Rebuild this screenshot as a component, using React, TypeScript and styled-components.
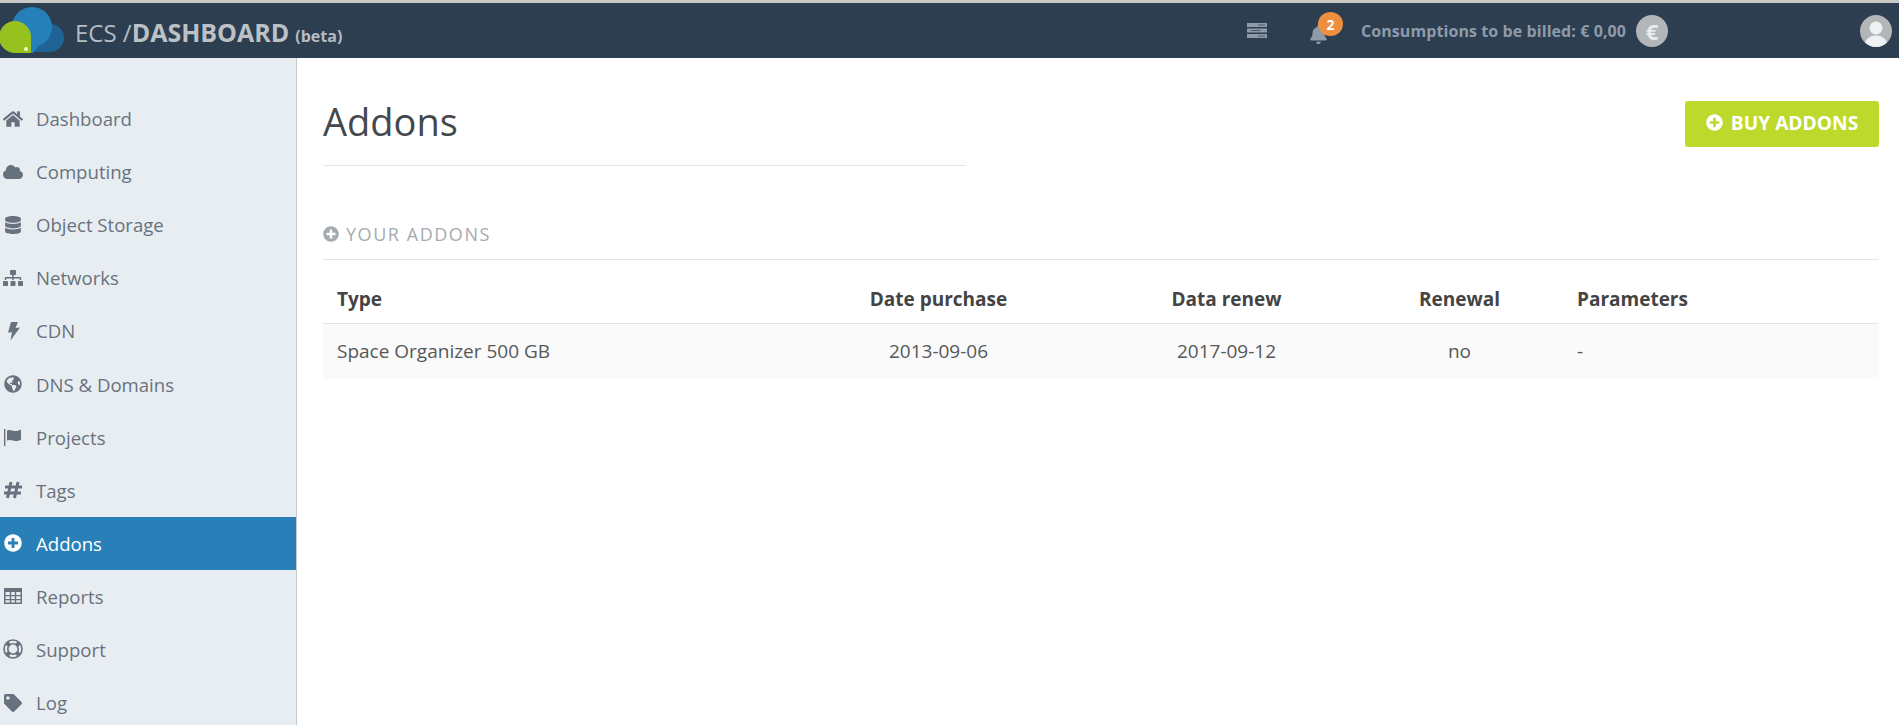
import * as React from "react";
import styled, { createGlobalStyle } from "styled-components";
import {
  FaHome,
  FaCloud,
  FaDatabase,
  FaSitemap,
  FaGlobeAmericas,
  FaPlusCircle,
  FaTag,
  FaBell,
} from "react-icons/fa";

const GlobalStyle = createGlobalStyle`
  html, body {
    margin: 0;
    height: 100%;
    overflow: hidden;
    background: #fff;
    font-family: "Open Sans", "Liberation Sans", sans-serif;
  }
`;

const Page = styled.div`
  box-sizing: border-box;
  border-top: 3px solid #c9c9c6;
  display: flex;
  flex-direction: column;
  height: 725px;
`;

const Header = styled.header`
  align-items: center;
  background: #2c3e50;
  display: flex;
  flex: 0 0 55px;
  padding-right: 7px;
`;

const Logo = styled.svg`
  flex: 0 0 auto;
  height: 55px;
  width: 66px;
`;

const Brand = styled.div`
  color: #b4bcc4;
  font-size: 24px;
  margin-left: 9px;
  margin-top: 3px;
  white-space: nowrap;

  b {
    color: #bcc1c6;
    font-size: 25px;
    font-weight: 700;
  }

  small {
    font-size: 16px;
    font-weight: 700;
    margin-left: 6px;
  }
`;

const HeaderRight = styled.div`
  align-items: center;
  color: #8f9baa;
  display: flex;
  margin-left: auto;
`;

const BellWrap = styled.div`
  display: flex;
  margin-left: 42px;
  margin-top: 8px;
  position: relative;
`;

const Badge = styled.span`
  align-items: center;
  background: #ee8f3f;
  border-radius: 50%;
  color: #fff;
  display: flex;
  font-size: 14px;
  font-weight: 700;
  height: 24px;
  justify-content: center;
  left: 9px;
  position: absolute;
  top: -13px;
  width: 25px;
`;

const Billing = styled.span`
  font-size: 16px;
  font-weight: 700;
  letter-spacing: 0.08px;
  margin-left: 33px;
`;

const RoundIcon = styled.span<{ $left: number }>`
  align-items: center;
  background: #b3b6b9;
  border-radius: 50%;
  color: #e9ecee;
  display: flex;
  font-size: 22px;
  font-weight: 700;
  height: 32px;
  justify-content: center;
  margin-left: ${(p) => p.$left}px;
  overflow: hidden;
  width: 32px;
`;

const Body = styled.div`
  display: flex;
  flex: 1;
  min-height: 0;
`;

const Sidebar = styled.nav`
  background: #e8edf2;
  border-right: 1px solid #c5c9cc;
  flex: 0 0 296px;
  overflow: hidden;
  padding-top: 34px;
`;

const NavItem = styled.a<{ $active?: boolean }>`
  align-items: center;
  background: ${(p) => (p.$active ? "#2980b9" : "transparent")};
  color: ${(p) => (p.$active ? "#fff" : "#68727e")};
  display: flex;
  font-size: 18.6px;
  height: 53.1px;

  svg {
    flex: 0 0 20px;
    font-size: 18px;
    margin: 0 13px 0 3px;
  }
`;

const Main = styled.main`
  flex: 1;
  min-width: 0;
  padding: 0 20px 0 26px;
`;

const TitleRow = styled.div`
  display: flex;
  justify-content: space-between;
`;

const TitleBlock = styled.div`
  border-bottom: 1px solid #e6e6e6;
  box-sizing: border-box;
  height: 108px;
  padding-top: 37px;
  width: 643px;
`;

const Title = styled.h1`
  color: #44484c;
  font-size: 38px;
  font-weight: 400;
  line-height: 52px;
  margin: 0;
`;

const BuyButton = styled.button`
  align-items: center;
  background: #bdd92c;
  border: none;
  border-radius: 3px;
  color: #fff;
  display: flex;
  font-family: inherit;
  font-size: 19.2px;
  font-weight: 700;
  gap: 8px;
  height: 46px;
  justify-content: center;
  margin-top: 43px;
  padding: 0 0 3px;
  width: 194px;
`;

const SectionTitle = styled.h2`
  align-items: center;
  border-bottom: 1px solid #e3e3e3;
  box-sizing: border-box;
  color: #a5abb1;
  display: flex;
  font-size: 18px;
  font-weight: 400;
  gap: 7px;
  height: 54px;
  letter-spacing: 1.55px;
  margin: 40px 0 0;
  padding-top: 3px;
  text-transform: uppercase;
`;

const Table = styled.table`
  border-collapse: collapse;
  color: #444;
  font-size: 19px;
  margin-top: 14px;
  table-layout: fixed;
  width: 100%;
`;

const Th = styled.th<{ $align?: string; $width: number }>`
  border-bottom: 1px solid #e3e3e3;
  box-sizing: border-box;
  font-weight: 700;
  height: 49px;
  padding: 2px 13px 0 14px;
  text-align: ${(p) => p.$align || "left"};
  width: ${(p) => p.$width}px;
`;

const Td = styled.td<{ $align?: string }>`
  background: #fafafa;
  color: #55585b;
  height: 55px;
  padding: 0 13px 0 14px;
  text-align: ${(p) => p.$align || "left"};
`;

const BoltIcon = () => (
  <svg viewBox="0 0 20 20" width="20" height="20" fill="currentColor">
    <path d="M8 1h7l-2.500 6 4.500-.5L7.500 19.500l1.500-8.500-4 .8z" />
  </svg>
);

const FlagIcon = () => (
  <svg viewBox="0 0 20 20" width="20" height="20" fill="currentColor">
    <rect x="1" y="2" width="1.4" height="17" />
    <path d="M4 3.500c4-1.500 6 1 9 .5 2.500-.4 4-1 5-1.500v10c-1.500 1-3.500 1.500-5 1.500-3 0-5-2-9-.5z" />
  </svg>
);

const HashIcon = () => (
  <svg viewBox="0 0 20 20" width="20" height="20" fill="none" stroke="currentColor" strokeWidth="3">
    <path d="M8 2 4.500 18M15 2l-3.500 16M2 7h17M1 13h17" />
  </svg>
);

const TableIcon = () => (
  <svg viewBox="0 0 20 20" width="20" height="20" fill="currentColor">
    <path
      fillRule="evenodd"
      d="M1 2h18v16H1zM2.500 6v3h4.300V6zm5.700 0v3h3.600V6zm5 0v3h4.300V6zM2.500 10.200v2.800h4.300v-2.800zm5.700 0v2.800h3.600v-2.800zm5 0v2.800h4.300v-2.800zM2.500 14.200v2.400h4.300v-2.400zm5.700 0v2.400h3.600v-2.400zm5 0v2.400h4.300v-2.400z"
    />
  </svg>
);

const RingIcon = () => (
  <svg viewBox="0 0 20 20" width="20" height="20" fill="none" stroke="currentColor">
    <circle cx="10" cy="10" r="9" strokeWidth="1.600" />
    <circle cx="10" cy="10" r="5.200" strokeWidth="1.600" />
    <path d="M4 4l2.500 2.500M16 4l-2.500 2.500M4 16l2.500-2.500M16 16l-2.500-2.500" strokeWidth="4" />
  </svg>
);

const ServerIcon = () => (
  <svg viewBox="0 0 20 15" width="20" height="15">
    <rect y="0" width="20" height="4" fill="#8f9baa" />
    <rect y="5.500" width="20" height="4" fill="#8f9baa" />
    <rect y="11" width="20" height="4" fill="#8f9baa" />
    <rect x="11" y="1.500" width="7" height="1" fill="#46586b" />
    <rect x="4" y="7" width="10" height="1" fill="#46586b" />
    <rect x="11" y="12.500" width="7" height="1" fill="#46586b" />
  </svg>
);

const AvatarIcon = () => (
  <svg viewBox="0 0 32 32" width="32" height="32">
    <circle cx="16" cy="13" r="6.500" fill="#eef1f2" />
    <ellipse cx="16" cy="29" rx="11" ry="8.500" fill="#eef1f2" />
  </svg>
);

const navItems = [
  { label: "Dashboard", icon: <FaHome /> },
  { label: "Computing", icon: <FaCloud /> },
  { label: "Object Storage", icon: <FaDatabase /> },
  { label: "Networks", icon: <FaSitemap /> },
  { label: "CDN", icon: <BoltIcon /> },
  { label: "DNS & Domains", icon: <FaGlobeAmericas /> },
  { label: "Projects", icon: <FlagIcon /> },
  { label: "Tags", icon: <HashIcon /> },
  { label: "Addons", icon: <FaPlusCircle />, active: true },
  { label: "Reports", icon: <TableIcon /> },
  { label: "Support", icon: <RingIcon /> },
  { label: "Log", icon: <FaTag /> },
];

const App = () => (
  <Page>
    <GlobalStyle />
    <Header>
      <Logo viewBox="0 0 66 55">
        <circle cx="50" cy="35" r="14" fill="#1f6394" />
        <rect x="30" y="35" width="20" height="14" fill="#1f6394" />
        <circle cx="32" cy="24" r="20" fill="#2580b9" />
        <path d="M25 35h20l-12 15h-8z" fill="#2580b9" />
        <path d="M-1 34a16 16 0 0 1 32 0V50H15A16 16 0 0 1-1 34z" fill="#96c11f" />
        <circle cx="26" cy="46" r="2" fill="#f0f7cc" />
      </Logo>
      <Brand>
        ECS /<b>DASHBOARD</b>
        <small>(beta)</small>
      </Brand>
      <HeaderRight>
        <ServerIcon />
        <BellWrap>
          <FaBell size={19} />
          <Badge>2</Badge>
        </BellWrap>
        <Billing>Consumptions to be billed: € 0,00</Billing>
        <RoundIcon $left={10}>€</RoundIcon>
        <RoundIcon $left={192}>
          <AvatarIcon />
        </RoundIcon>
      </HeaderRight>
    </Header>
    <Body>
      <Sidebar>
        {navItems.map((item) => (
          <NavItem key={item.label} $active={item.active}>
            {item.icon}
            {item.label}
          </NavItem>
        ))}
      </Sidebar>
      <Main>
        <TitleRow>
          <TitleBlock>
            <Title>Addons</Title>
          </TitleBlock>
          <BuyButton>
            <FaPlusCircle size={17} />
            BUY ADDONS
          </BuyButton>
        </TitleRow>
        <SectionTitle>
          <FaPlusCircle size={16} />
          Your Addons
        </SectionTitle>
        <Table>
          <thead>
            <tr>
              <Th $width={456}>Type</Th>
              <Th $width={318} $align="center">Date purchase</Th>
              <Th $width={258} $align="center">Data renew</Th>
              <Th $width={208} $align="center">Renewal</Th>
              <Th $width={316}>Parameters</Th>
            </tr>
          </thead>
          <tbody>
            <tr>
              <Td>Space Organizer 500 GB</Td>
              <Td $align="center">2013-09-06</Td>
              <Td $align="center">2017-09-12</Td>
              <Td $align="center">no</Td>
              <Td>-</Td>
            </tr>
          </tbody>
        </Table>
      </Main>
    </Body>
  </Page>
);

export default App;
